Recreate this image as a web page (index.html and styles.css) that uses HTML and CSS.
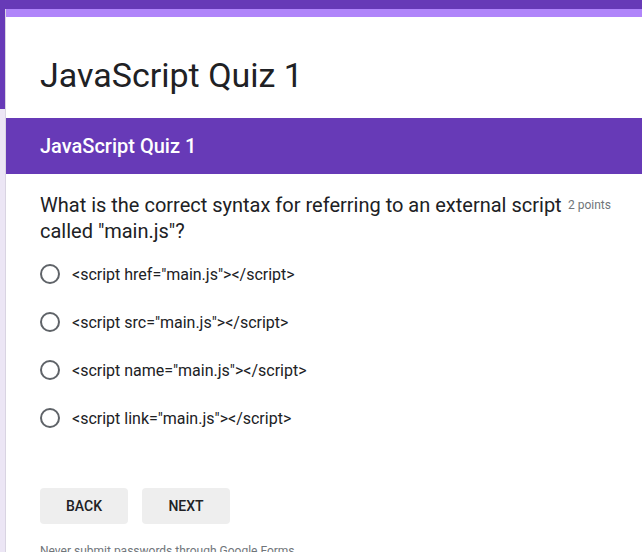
FILE: index.html
```html
<!DOCTYPE html>
<html>
<head>
<meta charset="utf-8">
<link rel="stylesheet" href="styles.css">
</head>
<body>
<div class="page">
  <div class="form">
    <div class="title-card">
      <h1 class="title">JavaScript Quiz 1</h1>
    </div>
    <div class="section">
      <div class="banner">JavaScript Quiz 1</div>
      <div class="question">
        <div class="q-head">
          <div class="q-text">What is the correct syntax for referring to an external script called "main.js"?</div>
          <div class="points">2 points</div>
        </div>
        <div class="options">
          <label class="option"><span class="radio"></span><span class="opt-text">&lt;script href="main.js"&gt;&lt;/script&gt;</span></label>
          <label class="option"><span class="radio"></span><span class="opt-text">&lt;script src="main.js"&gt;&lt;/script&gt;</span></label>
          <label class="option"><span class="radio"></span><span class="opt-text">&lt;script name="main.js"&gt;&lt;/script&gt;</span></label>
          <label class="option"><span class="radio"></span><span class="opt-text">&lt;script link="main.js"&gt;&lt;/script&gt;</span></label>
        </div>
      </div>
      <div class="nav">
        <button class="btn">BACK</button>
        <button class="btn">NEXT</button>
      </div>
      <div class="footer">Never submit passwords through Google Forms.</div>
    </div>
  </div>
</div>
</body>
</html>
```
FILE: styles.css
```css
html, body {
  margin: 0;
  padding: 0;
}
body {
  font-family: Roboto, "Liberation Sans", Arial, sans-serif;
  color: #202124;
  background: #f0ebf8;
  overflow: hidden;
}
.page {
  min-height: 552px;
  background: linear-gradient(#673ab7 0, #673ab7 109px, #ece6f5 109px);
  padding-top: 9px;
  padding-left: 6px;
}
.form {
  background: #fff;
  min-height: 543px;
  box-shadow: -1px 0 0 #d9d4e2;
}
.title-card {
  border-top: 8px solid #b085fa;
  height: 109px;
  box-sizing: border-box;
  padding: 38px 0 0 34px;
}
.title {
  margin: 0;
  font-weight: 400;
  font-size: 34px;
  line-height: 40px;
  color: #202124;
}
.banner {
  background: #673ab7;
  color: #fff;
  font-weight: 500;
  font-size: 20px;
  height: 56px;
  line-height: 56px;
  padding-left: 34px;
}
.question {
  padding: 18px 30px 0 34px;
}
.q-head {
  display: flex;
  align-items: flex-start;
}
.q-text {
  font-size: 20px;
  line-height: 26px;
  width: 528px;
}
.points {
  font-size: 12px;
  color: #70757a;
  padding-top: 6px;
  white-space: nowrap;
}
.options {
  display: flex;
  flex-direction: column;
  gap: 28px;
  margin-top: 20px;
}
.option {
  display: flex;
  align-items: center;
  height: 20px;
}
.radio {
  width: 16px;
  height: 16px;
  border: 2px solid #5f6368;
  border-radius: 50%;
  flex: none;
}
.opt-text {
  margin-left: 12px;
  font-size: 16px;
  color: #202124;
}
.nav {
  display: flex;
  gap: 14px;
  padding: 60px 0 0 34px;
}
.btn {
  width: 88px;
  height: 36px;
  border: none;
  border-radius: 4px;
  background: #eeeeee;
  font-family: Roboto, "Liberation Sans", Arial, sans-serif;
  font-weight: 500;
  font-size: 14px;
  color: #202124;
  padding: 0;
}
.footer {
  padding: 20px 0 0 34px;
  font-size: 12px;
  color: #70757a;
}
```
